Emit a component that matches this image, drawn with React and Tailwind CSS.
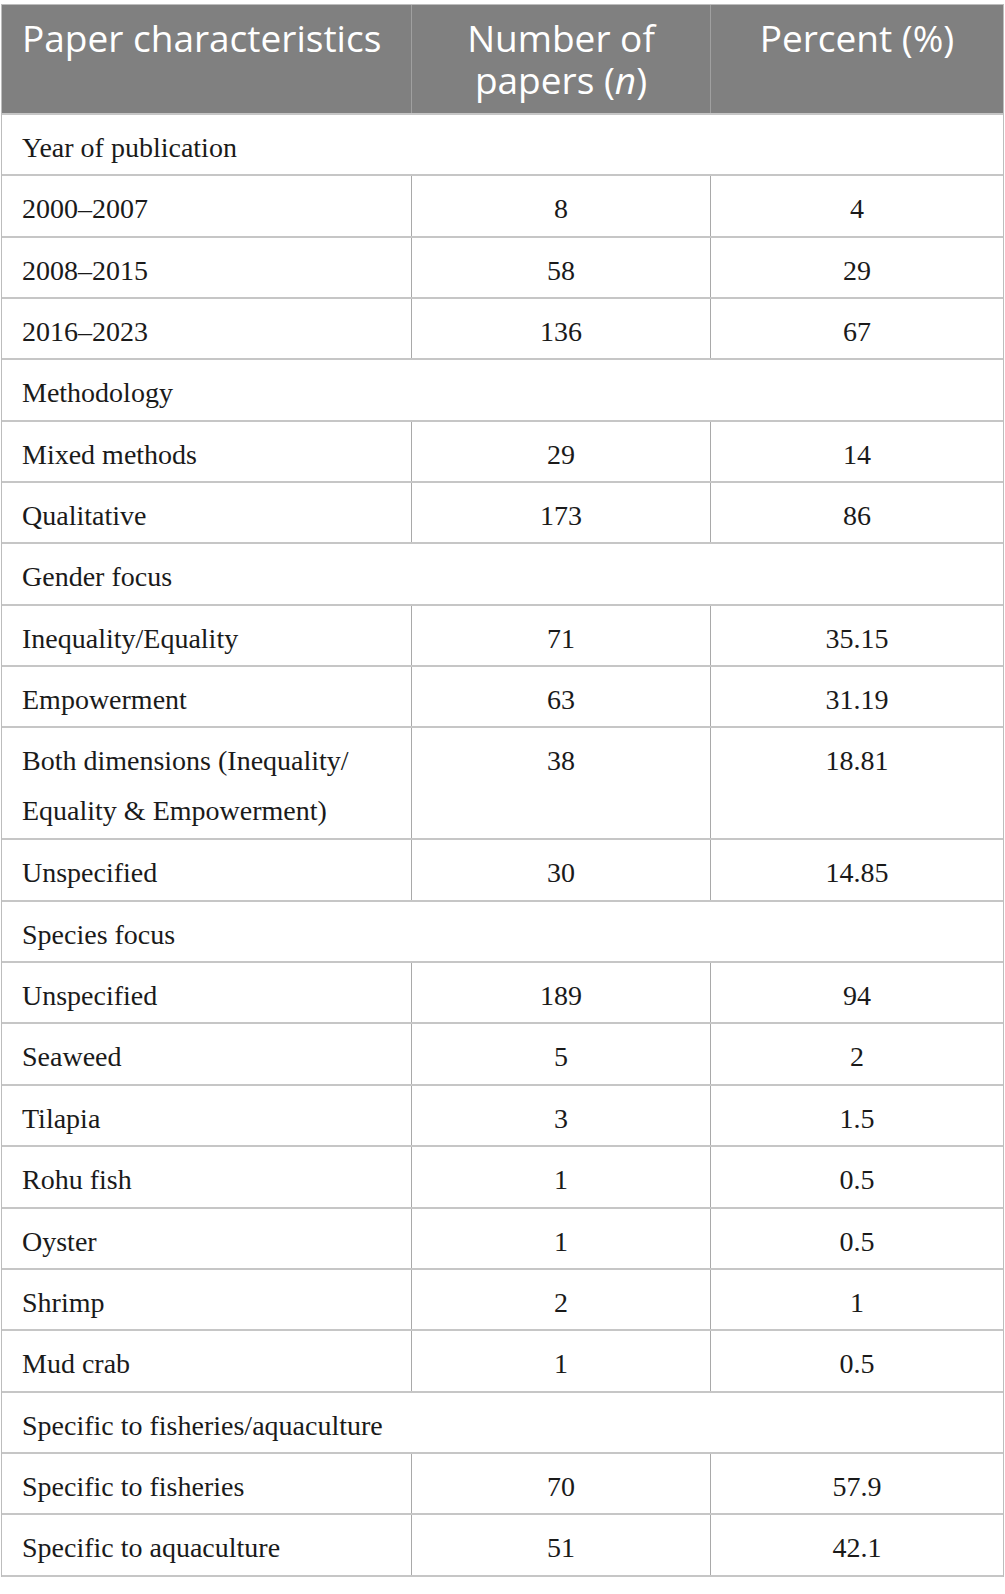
import React from 'react';

const rows = [
  { section: 'Year of publication' },
  { label: '2000–2007', n: '8', pct: '4' },
  { label: '2008–2015', n: '58', pct: '29' },
  { label: '2016–2023', n: '136', pct: '67' },
  { section: 'Methodology' },
  { label: 'Mixed methods', n: '29', pct: '14' },
  { label: 'Qualitative', n: '173', pct: '86' },
  { section: 'Gender focus' },
  { label: 'Inequality/Equality', n: '71', pct: '35.15' },
  { label: 'Empowerment', n: '63', pct: '31.19' },
  { label: 'Both dimensions (Inequality/ Equality & Empowerment)', n: '38', pct: '18.81', tall: true },
  { label: 'Unspecified', n: '30', pct: '14.85' },
  { section: 'Species focus' },
  { label: 'Unspecified', n: '189', pct: '94' },
  { label: 'Seaweed', n: '5', pct: '2' },
  { label: 'Tilapia', n: '3', pct: '1.5' },
  { label: 'Rohu fish', n: '1', pct: '0.5' },
  { label: 'Oyster', n: '1', pct: '0.5' },
  { label: 'Shrimp', n: '2', pct: '1' },
  { label: 'Mud crab', n: '1', pct: '0.5' },
  { section: 'Specific to fisheries/aquaculture' },
  { label: 'Specific to fisheries', n: '70', pct: '57.9' },
  { label: 'Specific to aquaculture', n: '51', pct: '42.1' },
];

const serif = { fontFamily: '"Liberation Serif", "Times New Roman", serif' };

const Row = ({ row }) => {
  if (row.section) {
    return (
      <div className="h-[61.35px] border-b-2 border-[#c6c6c6] pl-[20px] pt-[8px] text-[28px] leading-[50px] text-[#1a1a1a]">
        {row.section}
      </div>
    );
  }
  return (
    <div
      className={`grid grid-cols-[410px_299px_1fr] border-b-2 border-[#c6c6c6] text-[28px] leading-[50px] text-[#1a1a1a] ${
        row.tall ? 'h-[112px]' : 'h-[61.35px]'
      }`}
    >
      <div className="border-r border-[#a9a9a9] pl-[20px] pr-2 pt-[8px]">
        {row.tall ? (
          <>
            Both dimensions (Inequality/
            <br />
            Equality &amp; Empowerment)
          </>
        ) : (
          row.label
        )}
      </div>
      <div className="border-r border-[#a9a9a9] pt-[8px] text-center">{row.n}</div>
      <div className="pt-[8px] text-center">{row.pct}</div>
    </div>
  );
};

export default function App() {
  return (
    <div className="min-h-[1594px] w-[1005px] bg-white pt-[4px]">
      <div className="ml-[1px] w-[1003px] border-x border-t border-[#bdbdbd]" style={serif}>
        <div
          className="grid h-[110px] grid-cols-[410px_299px_1fr] border-b-2 border-[#c6c6c6] bg-[#808080] text-[37px] leading-[42px] text-white"
          style={{ fontFamily: '"Open Sans", "Liberation Sans", sans-serif' }}
        >
          <div className="whitespace-nowrap border-r border-[#a0a0a0] pl-[20px] pt-[12px]">Paper characteristics</div>
          <div className="border-r border-[#a0a0a0] pt-[12px] text-center">
            Number of
            <br />
            papers (<i>n</i>)
          </div>
          <div className="pt-[12px] text-center">Percent (%)</div>
        </div>
        {rows.map((row, i) => (
          <Row key={i} row={row} />
        ))}
      </div>
    </div>
  );
}
